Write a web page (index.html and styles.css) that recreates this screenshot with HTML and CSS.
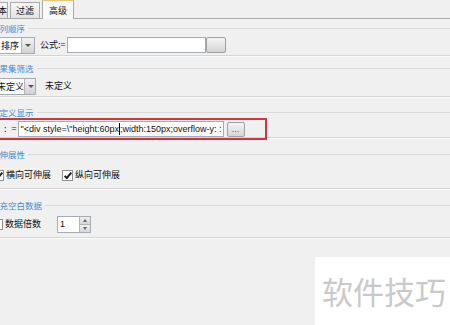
FILE: index.html
```html
<!DOCTYPE html>
<html lang="zh-CN">
<head>
    <meta charset="UTF-8">
    <title>高级</title>
    <link rel="stylesheet" href="styles.css">
</head>
<body>
    <div class="panel">
        <div class="tabs">
            <div class="tab tab-first">基本</div>
            <div class="tab">过滤</div>
            <div class="tab active">高级</div>
        </div>

        <div class="group g1">
            <div class="legend">行列顺序</div>
            <div class="row">
                <div class="combo combo-sort">
                    <span class="combo-text">排序</span>
                    <span class="combo-arrow"></span>
                </div>
                <span class="label formula">公式:=</span>
                <div class="field field-formula"></div>
                <button class="dots"></button>
            </div>
        </div>

        <div class="group g2">
            <div class="legend">结果集筛选</div>
            <div class="row">
                <div class="combo combo-filter">
                    <span class="combo-text">未定义</span>
                    <span class="combo-arrow"></span>
                </div>
                <span class="label undefined">未定义</span>
            </div>
        </div>

        <div class="group g3">
            <div class="legend">自定义显示</div>
            <div class="row highlight">
                <span class="label colon">:</span>
                <span class="label equals">=</span>
                <div class="field field-html">"&lt;div style=\"height:60px<span class="caret"></span>;width:150px;overflow-y: :</div>
                <button class="dots">...</button>
            </div>
        </div>

        <div class="group g4">
            <div class="legend">可伸展性</div>
            <div class="row">
                <span class="check checked"></span>
                <span class="label">横向可伸展</span>
                <span class="check checked second"></span>
                <span class="label">纵向可伸展</span>
            </div>
        </div>

        <div class="group g5">
            <div class="legend">补充空白数据</div>
            <div class="row">
                <span class="check"></span>
                <span class="label">数据倍数</span>
                <div class="spinner">
                    <span class="spin-value">1</span>
                    <span class="spin-buttons">
                        <span class="spin-up"></span>
                        <span class="spin-down"></span>
                    </span>
                </div>
            </div>
        </div>
    </div>

    <div class="watermark">软件技巧</div>
</body>
</html>
```

FILE: styles.css
```css
body {
    margin: 0;
    width: 450px;
    height: 325px;
    overflow: hidden;
    background-color: #f0f0f0;
    font-family: "Noto Sans CJK SC", "Liberation Sans", sans-serif;
    font-size: 9px;
    color: #111;
    position: relative;
}
.panel {
    margin-left: -12px;
    width: 480px;
}

/* tabs */
.tabs {
    display: flex;
    align-items: flex-end;
    height: 18px;
    border-bottom: 1px solid #a9a9a9;
}
.tab {
    height: 15px;
    line-height: 15px;
    padding: 0 5px;
    margin-right: 2px;
    border: 1px solid #a9a9a9;
    border-bottom: none;
    background: linear-gradient(#f7f7f7, #e3e3e3);
}
.tab-first {
    width: 18px;
    padding: 0;
    overflow: hidden;
    text-align: right;
}
.tab.active {
    height: 18px;
    line-height: 19px;
    margin-bottom: -1px;
    margin-right: 0;
    padding: 0 6px;
    background: #f9f9f9;
    border-top: 1px solid #e8c878;
}

/* groups */
.group {
    border-bottom: 1px solid #d6d6d6;
    box-shadow: 0 1px 0 #fbfbfb;
}
.legend {
    display: flex;
    align-items: center;
    height: 11px;
    line-height: 11px;
    margin-left: 3px;
    font-size: 8.5px;
    color: #3f8ad6;
    white-space: nowrap;
}
.legend::after {
    content: "";
    flex: 1;
    height: 1px;
    margin-left: 3px;
    background: #d9d9d9;
}
.row {
    display: flex;
    align-items: center;
    height: 16px;
    white-space: nowrap;
}
.label {
    line-height: 16px;
}

.g1 { padding: 4px 0 2px; }
.g1 .row { margin-top: 3px; }
.g2 { padding: 7px 0 2px; }
.g2 .row { margin-top: 4px; }
.g3 { padding: 10px 0 0; }
.g3 .row { margin-top: 3px; }
.g4 { padding: 11px 0 5px; }
.g4 .row { margin-top: 7px; }
.g5 { padding: 11px 0 5px; }
.g5 .row { margin-top: 5px; }

/* combo boxes */
.combo {
    display: flex;
    flex: none;
    height: 15px;
    border: 1px solid #a5acb5;
    background: #fff;
}
.combo-text {
    flex: 1;
    line-height: 15px;
}
.combo-sort { width: 45px; }
.combo-sort .combo-text { padding-left: 12px; }
.combo-filter { width: 46px; }
.combo-filter .combo-text { padding-left: 8px; }
.combo-arrow {
    width: 12px;
    background: linear-gradient(#f2f2f2, #d2d2d2);
    border-left: 1px solid #b5b5b5;
    position: relative;
}
.combo-arrow::after {
    content: "";
    position: absolute;
    left: 3px;
    top: 6px;
    border-left: 3px solid transparent;
    border-right: 3px solid transparent;
    border-top: 3px solid #555;
}
.formula { margin-left: 5px; margin-right: 1px; }
.undefined { margin-left: 9px; }

/* text fields */
.field {
    flex: none;
    height: 14px;
    border: 1px solid #a5acb5;
    background: #fff;
    overflow: hidden;
}
.field-formula { width: 137px; }
.field-html {
    width: 202px;
    padding-left: 2px;
    font-family: "Liberation Sans", sans-serif;
    font-size: 9px;
    line-height: 14px;
}
.caret {
    display: inline-block;
    width: 1px;
    height: 12px;
    background: #000;
    vertical-align: -3px;
}
.dots {
    flex: none;
    width: 20px;
    height: 16px;
    padding: 0;
    border: 1px solid #a0a0a0;
    border-radius: 2px;
    background: linear-gradient(#f4f4f4, #d4d4d4);
    font-family: "Liberation Sans", sans-serif;
    font-size: 9px;
    line-height: 10px;
    color: #555;
}
.g3 .dots { width: 18px; margin-left: 3px; height: 15px; }

.highlight {
    width: 276px;
    outline: 2px solid #d2343d;
    outline-offset: 1px;
}
.colon { margin-left: 16px; }
.equals { margin-left: 5px; margin-right: 1px; }

/* checkboxes */
.check {
    flex: none;
    width: 9px;
    height: 9px;
    margin-left: 5px;
    margin-right: 2px;
    border: 1px solid #8f8f8f;
    background: #fff;
    position: relative;
}
.check.checked::after {
    content: "";
    position: absolute;
    left: 3px;
    top: 0;
    width: 2px;
    height: 6px;
    border-right: 2px solid #222;
    border-bottom: 2px solid #222;
    transform: rotate(40deg);
}
.check.second { margin-left: 11px; }
.g5 .check { margin-left: 4px; }

/* spinner */
.spinner {
    display: flex;
    height: 15px;
    margin-left: 16px;
    border: 1px solid #a5acb5;
    background: #fff;
}
.spin-value {
    width: 19px;
    padding-left: 2px;
    line-height: 15px;
    font-family: "Liberation Sans", sans-serif;
    font-size: 9px;
}
.spin-buttons {
    display: flex;
    flex-direction: column;
    width: 10px;
    border-left: 1px solid #b5b5b5;
}
.spin-up, .spin-down {
    flex: 1;
    background: linear-gradient(#f0f0f0, #d6d6d6);
    position: relative;
}
.spin-up { border-bottom: 1px solid #b5b5b5; }
.spin-up::after, .spin-down::after {
    content: "";
    position: absolute;
    left: 3px;
    top: 2px;
    border-left: 2px solid transparent;
    border-right: 2px solid transparent;
}
.spin-up::after { border-bottom: 3px solid #666; }
.spin-down::after { border-top: 3px solid #666; }

/* watermark */
.watermark {
    position: absolute;
    right: 0;
    bottom: 0;
    width: 128px;
    height: 68px;
    padding-left: 7px;
    background: #fff;
    color: #c9c9c9;
    font-size: 31px;
    line-height: 68px;
}
```
